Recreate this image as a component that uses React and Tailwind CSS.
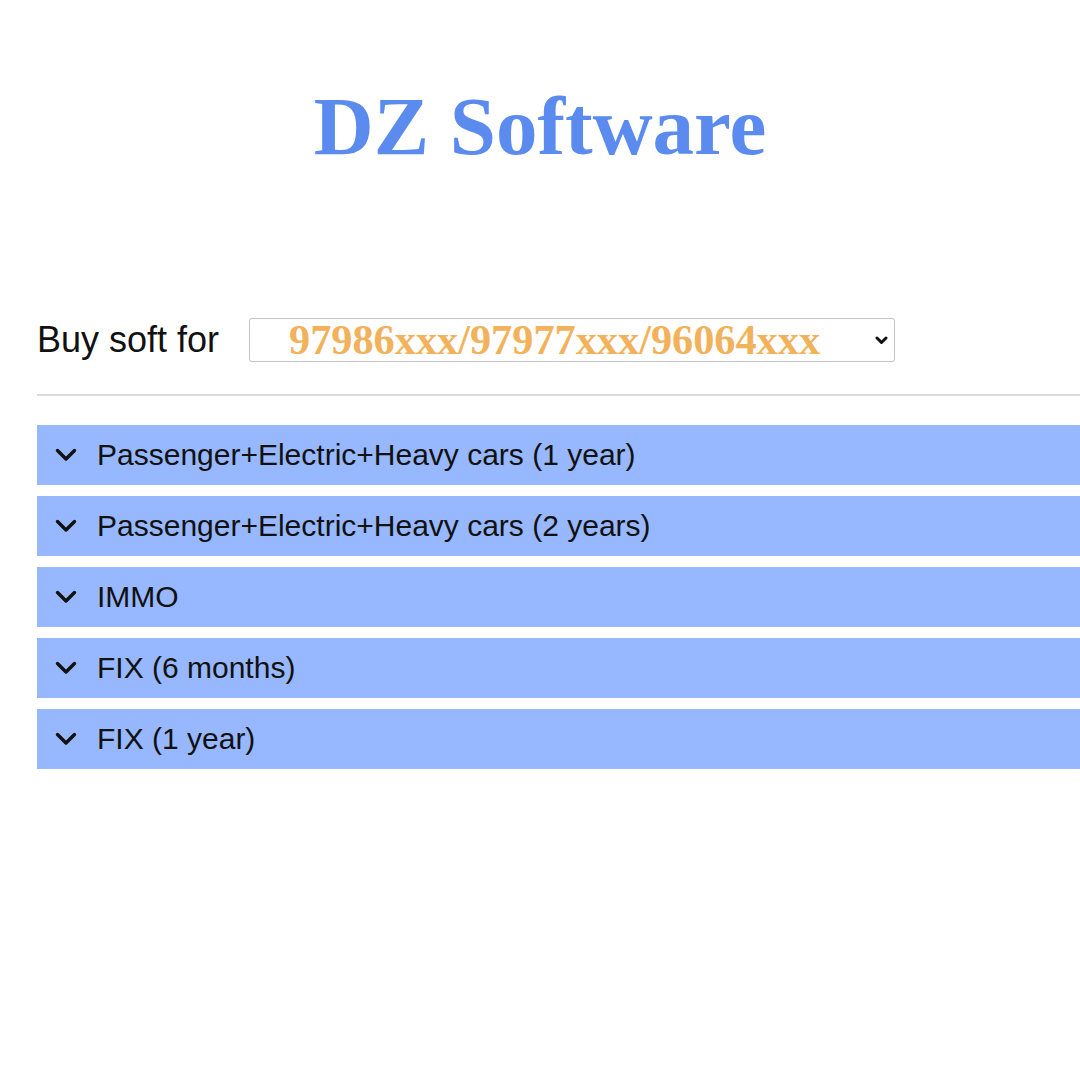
import { useState } from "react";

const plans = [
  "Passenger+Electric+Heavy cars (1 year)",
  "Passenger+Electric+Heavy cars (2 years)",
  "IMMO",
  "FIX (6 months)",
  "FIX (1 year)",
];

const Chevron = () => (
  <svg
    width="22"
    height="14"
    viewBox="0 0 22 14"
    fill="none"
    stroke="#111"
    strokeWidth="3.4"
    strokeLinecap="round"
    strokeLinejoin="round"
  >
    <polyline points="2.5,2.5 11,11 19.5,2.5" />
  </svg>
);

const App = () => {
  const [serial, setSerial] = useState("97986xxx/97977xxx/96064xxx");

  return (
    <div className="min-h-screen bg-white overflow-hidden font-['Liberation_Sans',Arial,sans-serif]">
      {/* HEADER */}
      <h1 className="pt-[85px] text-center text-[83px] leading-[83px] font-bold text-[#5b8bef] font-['Liberation_Serif','Times_New_Roman',serif]">
        DZ Software
      </h1>

      {/* SERIAL PICKER */}
      <div className="pl-[37px] mt-[145px]">
        <div className="flex items-center">
          <span className="text-[36px] text-[#111] w-[212px]">
            Buy soft for
          </span>

          <div className="relative w-[646px] h-[44px] border border-[#c4c4c4] rounded-[3px] bg-white">
            <select
              value={serial}
              onChange={(e) => setSerial(e.target.value)}
              className="appearance-none w-full h-full pl-[39px] bg-transparent text-[42.3px] leading-[42px] font-bold text-[#f2b25b] font-['Liberation_Serif','Times_New_Roman',serif] outline-none"
            >
              <option>97986xxx/97977xxx/96064xxx</option>
            </select>
            <svg
              className="absolute right-[6px] top-[17px] pointer-events-none"
              width="13"
              height="9"
              viewBox="0 0 13 9"
              fill="none"
              stroke="#111"
              strokeWidth="3"
              strokeLinecap="round"
              strokeLinejoin="round"
            >
              <polyline points="2,2 6.5,6.5 11,2" />
            </svg>
          </div>
        </div>

        <div className="mt-[27px] h-[2px] bg-[#dcdcdc]" />

        {/* PLANS */}
        <div className="mt-[29px] flex flex-col gap-[11.5px]">
          {plans.map((plan) => (
            <button
              key={plan}
              className="h-[59.5px] w-full bg-[#97b7fe] flex items-center pl-[18px] gap-[20px] text-left"
            >
              <Chevron />
              <span className="text-[30px] text-[#111]">
                {plan}
              </span>
            </button>
          ))}
        </div>
      </div>
    </div>
  );
};

export default App;
